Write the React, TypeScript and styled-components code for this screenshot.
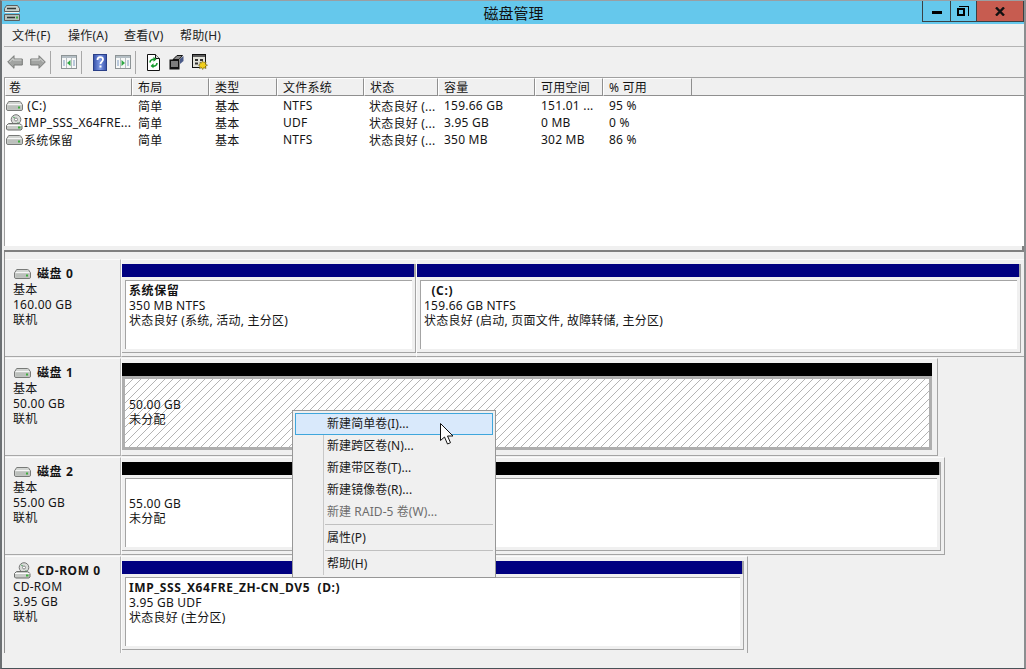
import React from 'react'
import styled, { createGlobalStyle } from 'styled-components'

const GlobalStyle = createGlobalStyle`
  html, body { margin: 0; padding: 0; background: #f0f0f0; }
  body { font-family: "Noto Sans", "Noto Sans CJK SC", sans-serif; font-size: 12px; letter-spacing: .22px; color: #141414; overflow: hidden; }
`

const columns = [
  { title: '卷', width: 127 },
  { title: '布局', width: 77 },
  { title: '类型', width: 68 },
  { title: '文件系统', width: 87 },
  { title: '状态', width: 74 },
  { title: '容量', width: 97 },
  { title: '可用空间', width: 68 },
  { title: '% 可用', width: 89 },
]

const volumes = [
  { icon: 'disk', name: ' (C:)', cells: ['简单', '基本', 'NTFS', '状态良好 (...', '159.66 GB', '151.01 ...', '95 %'] },
  { icon: 'cd', name: 'IMP_SSS_X64FRE...', cells: ['简单', '基本', 'UDF', '状态良好 (...', '3.95 GB', '0 MB', '0 %'] },
  { icon: 'disk', name: '系统保留', cells: ['简单', '基本', 'NTFS', '状态良好 (...', '350 MB', '302 MB', '86 %'] },
]

const menuItems = [
  { label: '新建简单卷(I)...', active: true },
  { label: '新建跨区卷(N)...' },
  { label: '新建带区卷(T)...' },
  { label: '新建镜像卷(R)...' },
  { label: '新建 RAID-5 卷(W)...', disabled: true },
  { separator: true },
  { label: '属性(P)' },
  { separator: true },
  { label: '帮助(H)' },
]

const DiskIcon = () => (
  <svg width="17" height="10" viewBox="0 0 17 10">
    <path d="M3 .5h10.500q1 0 1.500 1l1.500 2.500v4q0 1.500-1.500 1.500H2q-1.500 0-1.500-1.500V4L2 1.500q.3-1 1-1z" fill="#d2d5d2" stroke="#787a78" />
    <path d="M1.500 4.500h14v3.500q0 .7-.7.700H2.200q-.7 0-.7-.700z" fill="#bcc0bc" />
    <path d="M1.500 3.500h14" stroke="#f6f6f6" />
    <rect x="12" y="5.500" width="2" height="2" fill="#3fae3f" />
  </svg>
)

const CdIcon = () => (
  <svg width="17" height="17" viewBox="0 0 17 17">
    <circle cx="10" cy="5.500" r="4.800" fill="#d9dcd9" stroke="#777" />
    <circle cx="10" cy="5.500" r="1.500" fill="#fff" stroke="#888" />
    <path d="M7 3l2 1M11.500 8l1 1" stroke="#5aa86a" />
    <path d="M2.500 9.500h11l2.500 2v3.500l-1 1H1.500l-1-1v-3.500z" fill="#c8cbc8" stroke="#6d6f6d" />
    <path d="M1 11.500h14.500" stroke="#fbfbfb" />
    <rect x="12" y="12.500" width="2.500" height="2" fill="#3fae3f" />
  </svg>
)

const AppIcon = () => (
  <svg width="16" height="16" viewBox="0 0 16 16">
    <path d="M2.500.5h11l2 3v3H.5v-3z" fill="#c4d0cc" stroke="#5c5f5e" />
    <path d="M3 3.500h9" stroke="#2f3836" strokeWidth="1.500" />
    <path d="M1 7.500h14" stroke="#eef2f0" />
    <path d="M.5 9.500h15v6H.5z" fill="#b5c2be" stroke="#5c5f5e" />
    <path d="M3 12.500h8" stroke="#2f3836" strokeWidth="1.500" />
    <rect x="12" y="11.500" width="2" height="2" fill="#3fae3f" />
  </svg>
)

const ArrowIcon = ({ flip }: { flip?: boolean }) => (
  <svg width="16" height="14" viewBox="0 0 16 14" style={flip ? { transform: 'scaleX(-1)' } : undefined}>
    <path d="M7 .7L.7 7 7 13.300V10h8.300V4H7z" fill="#a2a4a2" stroke="#787a78" />
    <path d="M2.500 7L6 3.500V5h8.500" fill="none" stroke="#d4d6d4" />
  </svg>
)

const PaneIcon = ({ right }: { right?: boolean }) => (
  <svg width="16" height="14" viewBox="0 0 16 14">
    <rect x=".5" y=".5" width="15" height="13" fill="#f6f8f8" stroke="#8d9496" />
    <path d="M1 1h14v2H1z" fill="#b4bec4" />
    <path d="M5.500 3v10M10.500 3v10" stroke="#b6bdc0" />
    {right
      ? <path d="M6.500 5l3.500 3-3.500 3z" fill="#2fa844" />
      : <path d="M9.500 5L6 8l3.500 3z" fill="#2fa844" />}
    <path d="M2 6h2M2 8h2M2 10h2M12 6h2M12 8h2M12 10h2" stroke="#7f9bc0" />
  </svg>
)

const HelpIcon = () => (
  <svg width="14" height="17" viewBox="0 0 14 17">
    <defs>
      <linearGradient id="helpBlue" x1="0" x2="1" y1="0" y2="0">
        <stop offset="0" stopColor="#3550a8" />
        <stop offset=".5" stopColor="#7f9ae6" />
        <stop offset="1" stopColor="#3550a8" />
      </linearGradient>
    </defs>
    <rect width="13" height="16" x=".5" y=".5" fill="url(#helpBlue)" stroke="#2a3f88" />
    <path d="M4.500 6c0-4 5.500-3.500 5.500-.5 0 2-2.500 2.200-2.500 4.500" fill="none" stroke="#fff" strokeWidth="1.800" />
    <rect x="6.500" y="11.500" width="2" height="2" fill="#fff" />
  </svg>
)

const RefreshIcon = () => (
  <svg width="13" height="17" viewBox="0 0 13 17">
    <path d="M.5.500h8l4 4v12H.5z" fill="#fff" stroke="#111" />
    <path d="M8.500.500v4h4" fill="#ddd" stroke="#111" />
    <path d="M3 8.500c0-2.500 2.500-3.500 4.500-3M10 9c0 2.500-2.500 3.500-4.500 3" fill="none" stroke="#149a2c" strokeWidth="1.600" />
    <path d="M6.500 2.800l3 2.700-3 2.200zM6.500 9.300l-3 2.700 3 2.200z" fill="#149a2c" />
  </svg>
)

const PropsIcon = () => (
  <svg width="15" height="15" viewBox="0 0 15 15">
    <path d="M.5 4.500h10v10H.5z" fill="#111" />
    <path d="M2 7h7M2 9h7M2 11h7" stroke="#e8e8e8" />
    <path d="M4 4.500L8 .5h5.500l-3.500 4z" fill="#8a8a8a" stroke="#111" />
    <path d="M11 4l3.500-3v5l-3.500 3z" fill="#4a5a88" />
  </svg>
)

const ConfigIcon = () => (
  <svg width="16" height="16" viewBox="0 0 16 16">
    <rect x=".5" y=".5" width="13" height="13" fill="#e2e2da" stroke="#111" />
    <path d="M1 1h12v2H1z" fill="#5c5c5c" />
    <path d="M3 5h3v2H3zM8 5h3v2H8zM3 8.500h3v2H3z" fill="#333" />
    <path d="M8 8l1.500 1 1-2 1.200 1.500L14 8l-.5 2.200 2 1-2 1 .5 2.300-2.300-.8-1 1.800-1-1.800-2.200.8.500-2.300-1.500-1 1.500-1z" fill="#f2cf1d" stroke="#6a5a10" strokeWidth=".6" />
  </svg>
)

const Cursor = () => (
  <svg width="15" height="23" viewBox="0 0 15 23">
    <path d="M.5.500v17l4-3.500 3 7 3-1.300-3-6.700h5.500z" fill="#fff" stroke="#111" />
  </svg>
)

export default function App() {
  return (
    <Page>
      <GlobalStyle />
      <TitleBar>
        <TitleIcon><AppIcon /></TitleIcon>
        <Title>磁盘管理</Title>
        <CaptionButtons>
          <CaptionButton $width={28}><MinGlyph /></CaptionButton>
          <CaptionButton $width={26}><RestoreGlyph><span /></RestoreGlyph></CaptionButton>
          <CloseButton>
            <svg width="10" height="9" viewBox="0 0 10 9">
              <path d="M1 .5l8 8M9 .5l-8 8" stroke="#111" strokeWidth="2.400" />
            </svg>
          </CloseButton>
        </CaptionButtons>
      </TitleBar>
      <Body>
        <MenuBar>
          <MenuLabel>文件(F)</MenuLabel>
          <MenuLabel>操作(A)</MenuLabel>
          <MenuLabel>查看(V)</MenuLabel>
          <MenuLabel>帮助(H)</MenuLabel>
        </MenuBar>
        <Toolbar>
          <ToolButton $width={25} $pad={2}><ArrowIcon /></ToolButton>
          <ToolButton $width={20}><ArrowIcon flip /></ToolButton>
          <ToolSep />
          <ToolButton $width={30} $pad={10}><PaneIcon /></ToolButton>
          <ToolSep />
          <ToolButton $width={33} $pad={11}><HelpIcon /></ToolButton>
          <ToolButton $width={20}><PaneIcon right /></ToolButton>
          <ToolSep />
          <ToolButton $width={33} $pad={11}><RefreshIcon /></ToolButton>
          <ToolButton $width={23}><PropsIcon /></ToolButton>
          <ToolButton $width={24}><ConfigIcon /></ToolButton>
        </Toolbar>
        <ListPane>
          <HeaderRow>
            {columns.map((c) => <HeaderCell key={c.title} $width={c.width}>{c.title}</HeaderCell>)}
            <HeaderFill />
          </HeaderRow>
          {volumes.map((v) => (
            <VolumeRow key={v.name}>
              <NameCell $width={columns[0].width}>
                <NameIcon>{v.icon === 'cd' ? <CdIcon /> : <DiskIcon />}</NameIcon>
                <span>{v.name}</span>
              </NameCell>
              {v.cells.map((text, i) => <Cell key={i} $width={columns[i + 1].width}>{text}</Cell>)}
            </VolumeRow>
          ))}
        </ListPane>
        <Splitter />
        <DiskPane>
          <DiskRow>
            <DiskLabel>
              <DiskName><DiskIcon /><b>磁盘 0</b></DiskName>
              <div>基本</div><div>160.00 GB</div><div>联机</div>
            </DiskLabel>
            <Partition $width={295} $flush>
              <PartInner>
                <PartBar />
                <PartBody>
                  <b>系统保留</b>
                  <div>350 MB NTFS</div>
                  <div>状态良好 (系统, 活动, 主分区)</div>
                </PartBody>
              </PartInner>
            </Partition>
            <Partition $width={609}>
              <PartInner>
                <PartBar />
                <PartBody>
                  <b>&nbsp;&nbsp;(C:)</b>
                  <div>159.66 GB NTFS</div>
                  <div>状态良好 (启动, 页面文件, 故障转储, 主分区)</div>
                </PartBody>
              </PartInner>
            </Partition>
          </DiskRow>
          <DiskRow>
            <DiskLabel>
              <DiskName><DiskIcon /><b>磁盘 1</b></DiskName>
              <div>基本</div><div>50.00 GB</div><div>联机</div>
            </DiskLabel>
            <Partition $width={817} $selected>
              <SelectedInner>
                <PartBar $black $plain />
                <SelectedRing>
                  <HatchedBody>
                    <Spacer />
                    <div>50.00 GB</div>
                    <div>未分配</div>
                  </HatchedBody>
                </SelectedRing>
              </SelectedInner>
            </Partition>
          </DiskRow>
          <DiskRow>
            <DiskLabel>
              <DiskName><DiskIcon /><b>磁盘 2</b></DiskName>
              <div>基本</div><div>55.00 GB</div><div>联机</div>
            </DiskLabel>
            <Partition $width={824}>
              <PartInner>
                <PartBar $black />
                <PartBody>
                  <Spacer />
                  <div>55.00 GB</div>
                  <div>未分配</div>
                </PartBody>
              </PartInner>
            </Partition>
          </DiskRow>
          <DiskRow>
            <DiskLabel>
              <DiskName><CdIcon /><b>CD-ROM 0</b></DiskName>
              <div>CD-ROM</div><div>3.95 GB</div><div>联机</div>
            </DiskLabel>
            <Partition $width={627}>
              <PartInner>
                <PartBar />
                <PartBody>
                  <b>IMP_SSS_X64FRE_ZH-CN_DV5&nbsp;&nbsp;(D:)</b>
                  <div>3.95 GB UDF</div>
                  <div>状态良好 (主分区)</div>
                </PartBody>
              </PartInner>
            </Partition>
          </DiskRow>
        </DiskPane>
        <StatusBar />
      </Body>
      <ContextMenu>
        <MenuRail />
        {menuItems.map((item, i) =>
          item.separator
            ? <MenuSep key={i} />
            : <MenuItem key={i} $active={item.active} $disabled={item.disabled}>{item.label}</MenuItem>,
        )}
      </ContextMenu>
      <CursorWrap><Cursor /></CursorWrap>
    </Page>
  )
}

const Page = styled.div`
  position: relative;
  width: 1026px;
  height: 669px;
  box-sizing: border-box;
  display: flex;
  flex-direction: column;
  background: #f0f0f0;
  border-top: 1px solid #9a9fa3;
  border-left: 2px solid #6c7073;
  border-right: 2px solid #8b8e90;
  border-bottom: 1px solid #4a5258;
  overflow: hidden;
`

const TitleBar = styled.div`
  display: flex;
  align-items: flex-start;
  height: 23px;
  flex: none;
  background: #65c8ec;
`

const TitleIcon = styled.div`
  width: 16px;
  margin: 4px 0 0 2px;
  display: flex;
`

const Title = styled.div`
  position: absolute;
  left: 1px;
  right: 0;
  top: 3px;
  text-align: center;
  font-size: 15px;
  line-height: 18px;
  letter-spacing: 0;
  color: #111;
`

const CaptionButtons = styled.div`
  display: flex;
  margin-left: auto;
  height: 20px;
  position: relative;
  border: 1px solid #3a4144;
  border-top: none;
`

const CaptionButton = styled.div<{ $width: number }>`
  width: ${(p) => p.$width}px;
  display: flex;
  align-items: center;
  justify-content: center;
  box-sizing: border-box;
  border-right: 1px solid #3a4144;
`

const CloseButton = styled.div`
  width: 46px;
  display: flex;
  align-items: center;
  justify-content: center;
  background: #c75c50;
`

const MinGlyph = styled.span`
  display: block;
  width: 10px;
  height: 3px;
  margin-top: 3px;
  background: #000;
`

const RestoreGlyph = styled.div`
  position: relative;
  width: 10px;
  height: 10px;
  box-sizing: border-box;
  border-top: 1px solid #000;
  border-right: 1px solid #000;
  span {
    position: absolute;
    left: -2px;
    top: 1px;
    width: 8px;
    height: 8px;
    box-sizing: border-box;
    border: 2px solid #000;
    background: #65c8ec;
  }
`

const Body = styled.div`
  flex: 1;
  min-height: 0;
  display: flex;
  flex-direction: column;
  padding-left: 2px;
`

const MenuBar = styled.div`
  display: flex;
  flex: none;
  height: 23px;
  align-items: center;
  box-sizing: border-box;
  border-bottom: 1px solid #b4b4b4;
`

const MenuLabel = styled.div`
  width: 56px;
  padding-left: 8px;
  box-sizing: border-box;
  color: #222;
`

const Toolbar = styled.div`
  display: flex;
  flex: none;
  height: 30px;
  align-items: center;
  padding-left: 1px;
  box-sizing: border-box;
`

const ToolButton = styled.div<{ $width: number; $pad?: number }>`
  width: ${(p) => p.$width}px;
  box-sizing: border-box;
  padding-left: ${(p) => p.$pad ?? 0}px;
  display: flex;
  align-items: center;
`

const ToolSep = styled.div`
  width: 1px;
  height: 23px;
  background: #a8a8a8;
`

const ListPane = styled.div`
  flex: none;
  height: 169px;
  background: #fff;
  border-left: 1px solid #a0a0a0;
  border-top: 1px solid #a0a0a0;
  box-sizing: border-box;
`

const HeaderRow = styled.div`
  display: flex;
  height: 18px;
`

const HeaderCell = styled.div<{ $width: number }>`
  width: ${(p) => p.$width}px;
  flex: none;
  box-sizing: border-box;
  padding: 1px 0 0 5px;
  line-height: 16px;
  background: #f0f0f0;
  border-right: 1px solid #8f8f8f;
  border-bottom: 1px solid #8f8f8f;
  border-left: 1px solid #fff;
  border-top: 1px solid #fff;
  &:first-child { padding-left: 3px; }
`

const HeaderFill = styled.div`
  flex: 1;
  background: #f0f0f0;
  border-bottom: 1px solid #8f8f8f;
`

const VolumeRow = styled.div`
  display: flex;
  height: 17px;
  padding-top: 2px;
  box-sizing: border-box;
  align-items: center;
`

const Cell = styled.div<{ $width: number }>`
  width: ${(p) => p.$width}px;
  flex: none;
  box-sizing: border-box;
  padding-left: 6px;
  white-space: pre;
  &:nth-child(5) { padding-left: 5px; }
`

const NameCell = styled(Cell)`
  display: flex;
  align-items: center;
  padding-left: 0;
`

const NameIcon = styled.div`
  width: 19px;
  flex: none;
  display: flex;
  justify-content: center;
`

const Splitter = styled.div`
  flex: none;
  height: 6px;
  background: #f0f0f0;
  border-bottom: 2px solid #808080;
  border-right: 2px solid #808080;
  box-sizing: border-box;
`

const DiskPane = styled.div`
  flex: 1;
  min-height: 0;
  padding-top: 6px;
  border-left: 1px solid #8f8f8f;
  overflow: hidden;
  b { letter-spacing: .6px; }
`

const DiskRow = styled.div`
  display: flex;
  height: 99px;
  padding-top: 1px;
  box-sizing: border-box;
`

const DiskLabel = styled.div`
  width: 116px;
  flex: none;
  box-sizing: border-box;
  padding: 6px 0 0 8px;
  line-height: 15px;
  border-top: 1px solid #fbfbfb;
  border-right: 1px solid #b8b8b8;
  border-bottom: 1px solid #a8a8a8;
`

const DiskName = styled.div`
  display: flex;
  align-items: center;
  gap: 6px;
  height: 15px;
  margin-bottom: 1px;
  padding-left: 1px;
  b { font-weight: 700; }
`

const Partition = styled.div<{ $width: number; $flush?: boolean; $selected?: boolean }>`
  width: ${(p) => p.$width}px;
  flex: none;
  box-sizing: border-box;
  display: flex;
  padding: ${(p) => (p.$selected ? '4px 5px 5px 0' : p.$flush ? '4px 0 3px 0' : '4px 3px 3px 0')};
  border-top: 1px solid #fbfbfb;
  border-left: 1px solid #fbfbfb;
  border-bottom: 1px solid #a4a4a4;
  border-right: ${(p) => (p.$flush ? 'none' : '1px solid #a4a4a4')};
`

const PartInner = styled.div`
  flex: 1;
  min-width: 0;
  display: flex;
  flex-direction: column;
  border-right: 1px solid #a4a4a4;
  border-bottom: 1px solid #a4a4a4;
`

const SelectedInner = styled.div`
  flex: 1;
  min-width: 0;
  display: flex;
  flex-direction: column;
`

const PartBar = styled.div<{ $black?: boolean; $plain?: boolean }>`
  height: 13px;
  flex: none;
  background: ${(p) => (p.$black ? '#000' : '#000080')};
  border-right: ${(p) => (p.$plain ? 'none' : '1px solid #a4a4a4')};
`

const PartBody = styled.div`
  flex: 1;
  margin: 3px;
  box-sizing: border-box;
  padding: 2px 3px;
  line-height: 15px;
  background: #fff;
  border-left: 1px solid #a4a4a4;
  border-top: 1px solid #a4a4a4;
  b { font-weight: 700; display: block; }
`

const SelectedRing = styled.div`
  flex: 1;
  display: flex;
  box-sizing: border-box;
  border: 3px solid #aeaeae;
`

const HatchedBody = styled.div`
  flex: 1;
  box-sizing: border-box;
  padding: 3px 4px;
  line-height: 15px;
  background: repeating-linear-gradient(135deg, #fff 0, #fff 4.95px, #b4b4b4 4.95px, #b4b4b4 5.657px);
`

const Spacer = styled.div`
  height: 15px;
`

const StatusBar = styled.div`
  flex: none;
  height: 15px;
`

const ContextMenu = styled.div`
  position: absolute;
  left: 290px;
  top: 409px;
  width: 204px;
  height: 168px;
  box-sizing: border-box;
  padding: 2px;
  background: #f0f0f0;
  border: 1px solid #979797;
  letter-spacing: .08px;
  z-index: 2;
`

const MenuRail = styled.div`
  position: absolute;
  left: 30px;
  top: 2px;
  bottom: 2px;
  width: 1px;
  background: #c8c8c8;
`

const MenuItem = styled.div<{ $active?: boolean; $disabled?: boolean }>`
  position: relative;
  height: 22px;
  box-sizing: border-box;
  padding-left: 31px;
  line-height: 20px;
  white-space: pre;
  color: ${(p) => (p.$disabled ? '#6d6d6d' : '#1a1a1a')};
  border: 1px solid ${(p) => (p.$active ? '#3fa6dc' : 'transparent')};
  background: ${(p) => (p.$active ? '#d9e9fb' : 'transparent')};
`

const MenuSep = styled.div`
  position: relative;
  height: 1px;
  margin: 1px 0 2px 30px;
  background: #c0c0c0;
`

const CursorWrap = styled.div`
  position: absolute;
  left: 438px;
  top: 422px;
  z-index: 3;
  display: flex;
`
